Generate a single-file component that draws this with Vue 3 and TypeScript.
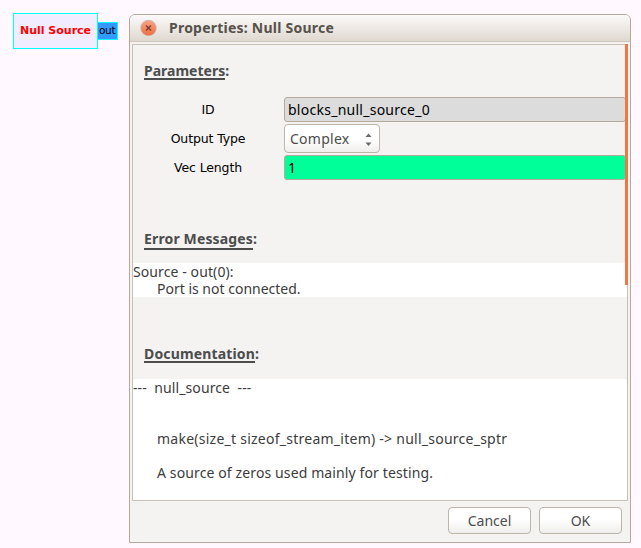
<script setup lang="ts">
interface TextLine {
  text: string
  kind: string
}

const errors: TextLine[] = [
  { text: 'Source - out(0):', kind: 'line-source' },
  { text: 'Port is not connected.', kind: 'indent line-port' },
]
const docs: TextLine[] = [
  { text: '---  null_source  ---', kind: 'line-name' },
  { text: '', kind: '' },
  { text: '', kind: '' },
  { text: 'make(size_t sizeof_stream_item) -> null_source_sptr', kind: 'indent line-make' },
  { text: '', kind: '' },
  { text: 'A source of zeros used mainly for testing.', kind: 'indent line-about' },
]
</script>

<template>
  <main class="canvas">
    <div class="block">
      <div class="block-body">Null Source</div>
      <div class="port">out</div>
    </div>
    <section class="dialog">
      <header class="titlebar">
        <svg class="close" width="18" height="18" viewBox="0 0 18 18">
          <defs>
            <linearGradient id="closeFill" x1="0" y1="0" x2="0" y2="1">
              <stop offset="0" stop-color="#f9a184" />
              <stop offset="1" stop-color="#ee6f42" />
            </linearGradient>
          </defs>
          <circle cx="8.5" cy="9" r="8.3" fill="#cfc3ba" />
          <circle cx="8.5" cy="9" r="7.5" fill="url(#closeFill)" />
          <path d="M6 6.5l5 5M11 6.5l-5 5" stroke="#6b3a26" stroke-width="1.1" />
        </svg>
        <span class="title">Properties: Null Source</span>
      </header>
      <div class="frame">
        <div class="scroll">
          <h2 class="heading params"><span class="u">Parameters</span>:</h2>
          <div class="form">
            <label class="label">ID</label>
            <div class="entry grey"><span class="id-value">blocks_null_source_0</span></div>
            <label class="label">Output Type</label>
            <div class="combo">
              <span class="combo-text">Complex</span>
              <svg width="7" height="14" viewBox="0 0 7 14">
                <path d="M0.5 5L3.5 1.5L6.5 5ZM0.5 10.5L3.5 14L6.5 10.5Z" fill="#6b6b69" />
              </svg>
            </div>
            <label class="label">Vec Length</label>
            <div class="entry green">1</div>
          </div>
          <h2 class="heading errors"><span class="u">Error Messages</span>:</h2>
          <div class="text-view">
            <div v-for="(l, i) in errors" :key="i" class="line"><span :class="l.kind">{{ l.text }}</span></div>
          </div>
          <h2 class="heading docs"><span class="u">Documentation</span>:</h2>
          <div class="text-view grow">
            <div v-for="(l, i) in docs" :key="i" class="line"><span :class="l.kind">{{ l.text }}</span></div>
          </div>
        </div>
        <div class="scrollbar"></div>
      </div>
      <footer class="actions">
        <button class="btn">Cancel</button>
        <button class="btn">OK</button>
      </footer>
    </section>
  </main>
</template>

<style>
body { background: #fff9ff; }
</style>

<style scoped>
* { box-sizing: border-box; }
.canvas {
  display: flex;
  width: 641px;
  height: 548px;
  padding: 13px 10px 5px 13px;
  overflow: hidden;
  background: #fff9ff;
  font-family: "Noto Sans", "Open Sans", sans-serif;
  font-size: 14px;
  color: #3c3c3c;
}
.block { display: flex; width: 116px; flex: none; font-family: "DejaVu Sans", sans-serif; }
.block-body {
  width: 85px;
  height: 36px;
  border: 1px solid #00ffff;
  background: #f1ecff;
  color: #ff0000;
  font-size: 11px;
  font-weight: bold;
  line-height: 34px;
  text-align: center;
  white-space: nowrap;
}
.port {
  width: 20px;
  height: 18px;
  margin-top: 9px;
  padding-left: 1px;
  border: 1px solid #00ffff;
  border-left: 0;
  background: #3399ff;
  color: #000;
  font-size: 10.5px;
  line-height: 15px;
  letter-spacing: -0.3px;
}
.dialog {
  display: flex;
  flex-direction: column;
  width: 502px;
  height: 529px;
  margin-top: 1px;
  border: 1px solid #b5a99c;
  border-radius: 6px 6px 0 0;
  background: #f4f3f2;
  overflow: hidden;
}
.titlebar {
  display: flex;
  align-items: center;
  height: 27px;
  flex: none;
  padding-left: 10px;
  border-bottom: 1px solid #d0c3b8;
  background: linear-gradient(#fbfaf9, #dfd8d0);
}
.close { margin-right: 11px; }
.title { padding-bottom: 2px; font-weight: bold; color: #57514b; letter-spacing: 0.23px; white-space: nowrap; }
.frame {
  position: relative;
  width: 496px;
  height: 457px;
  margin: 2px 0 0 2px;
  border: 1px solid #c9bfb5;
  flex: none;
}
.scroll { display: flex; flex-direction: column; height: 100%; }
.scrollbar { position: absolute; top: -1px; right: -1px; width: 3px; height: 241px; background: #f07746; }
.heading { margin: 0; padding-left: 11px; font-size: 14px; line-height: 18px; font-weight: bold; color: #4c4c4c; white-space: nowrap; }
.u { display: inline-block; height: 18px; border-bottom: 2px solid #4c4c4c; vertical-align: top; }
.params { margin-top: 17px; height: 18px; }
.form {
  display: grid;
  grid-template-columns: 151px 342px;
  grid-template-rows: 25px 29px 25px;
  row-gap: 2px;
  margin-top: 17px;
}
.label { align-self: center; padding-right: 1px; text-align: center; font-family: "DejaVu Sans", sans-serif; font-size: 12.5px; color: #000; letter-spacing: -0.13px; }
.entry {
  border: 1px solid #b5a99c;
  border-radius: 3px;
  padding-left: 3px;
  line-height: 23px;
  color: #000;
  white-space: nowrap;
}
.id-value { letter-spacing: 0.26px; }
.grey { background: #dcdcdc; }
.green { background: #00ff99; }
.combo {
  display: flex;
  align-items: center;
  justify-content: space-between;
  width: 96px;
  height: 29px;
  padding: 0 7px 0 5px;
  border: 1px solid #bdb4aa;
  border-radius: 4px;
  background: linear-gradient(#fff 50%, #efeeec);
  color: #4c4c4c;
}
.combo-text { letter-spacing: 0.25px; }
.errors { margin-top: 50px; height: 20px; letter-spacing: 0.14px; }
.errors .u { height: 20px; }
.text-view { background: #fff; }
.errors + .text-view { margin-top: 13px; height: 34px; }
.docs { margin-top: 48px; height: 18px; letter-spacing: 0.15px; }
.grow { flex: 1; margin-top: 16px; }
.line { height: 17px; line-height: 17px; white-space: pre; }
.indent { margin-left: 24px; }
.line-source { letter-spacing: 0.1px; }
.line-name { letter-spacing: 0.1px; }
.line-make { letter-spacing: 0.25px; }
.line-about { letter-spacing: 0.12px; }
.actions { display: flex; justify-content: flex-end; gap: 8px; padding: 6px 8px 0 0; }
.btn {
  width: 83px;
  height: 27px;
  padding: 0;
  border: 1px solid #bdb4aa;
  border-radius: 4px;
  background: linear-gradient(#fff 45%, #efeeec);
  font: inherit;
  color: #4c4c4c;
}
</style>
